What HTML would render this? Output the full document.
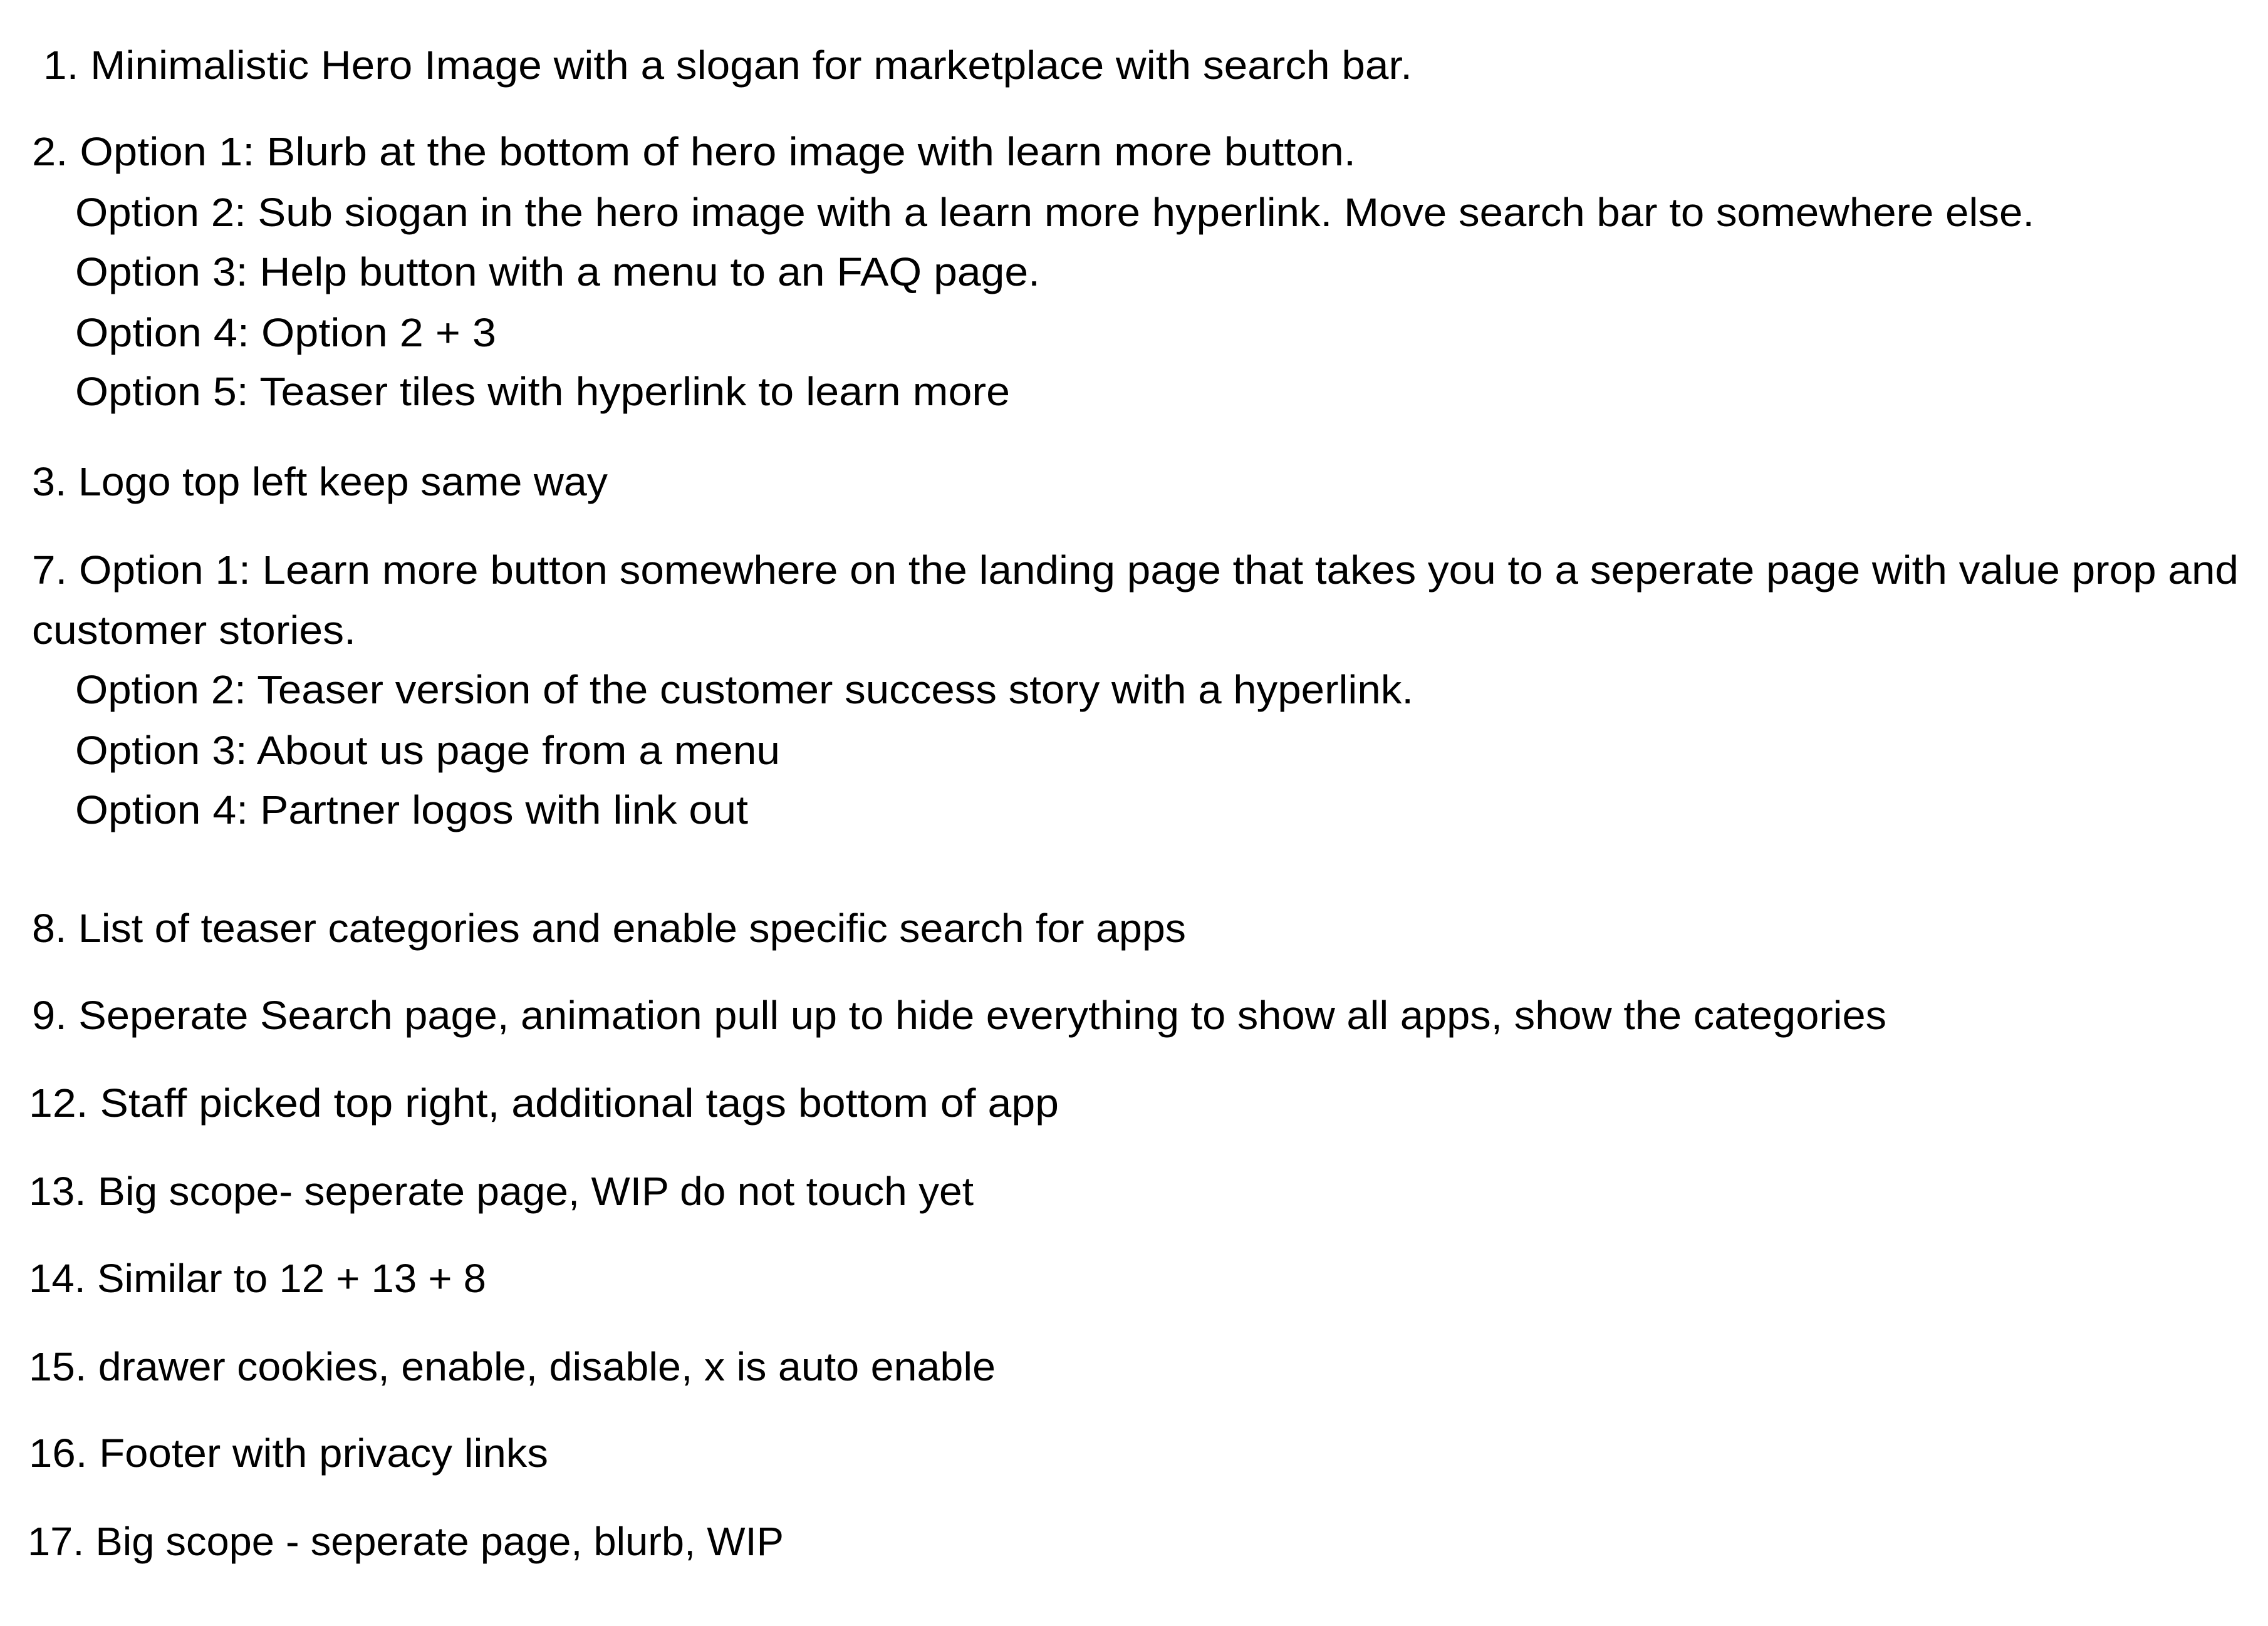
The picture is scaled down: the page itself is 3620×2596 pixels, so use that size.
<!DOCTYPE html>
<html><head><meta charset="utf-8"><style>
html,body{margin:0;padding:0;background:#fff;width:3620px;height:2596px;overflow:hidden}
svg{display:block}
text{font-family:"Liberation Sans",sans-serif;font-size:64px;fill:#000}
</style></head><body>
<svg width="3620" height="2596" xmlns="http://www.w3.org/2000/svg">
<text x="69" y="126" textLength="2185" lengthAdjust="spacingAndGlyphs">1. Minimalistic Hero Image with a slogan for marketplace with search bar.</text>
<text x="51" y="264" textLength="2113" lengthAdjust="spacingAndGlyphs">2. Option 1: Blurb at the bottom of hero image with learn more button.</text>
<text x="120" y="361" textLength="3127" lengthAdjust="spacingAndGlyphs">Option 2: Sub siogan in the hero image with a learn more hyperlink. Move search bar to somewhere else.</text>
<text x="120" y="456" textLength="1540" lengthAdjust="spacingAndGlyphs">Option 3:  Help button with a menu to an FAQ page.</text>
<text x="120" y="553" textLength="672" lengthAdjust="spacingAndGlyphs">Option 4:  Option 2 + 3</text>
<text x="120" y="647" textLength="1492" lengthAdjust="spacingAndGlyphs">Option 5: Teaser tiles with hyperlink to learn more</text>
<text x="51" y="791" textLength="919" lengthAdjust="spacingAndGlyphs">3. Logo top left keep same way</text>
<text x="51" y="932" textLength="3522" lengthAdjust="spacingAndGlyphs">7. Option 1: Learn more button somewhere on the landing page that takes you to a seperate page with value prop and</text>
<text x="51" y="1028" textLength="517" lengthAdjust="spacingAndGlyphs">customer stories.</text>
<text x="120" y="1123" textLength="2136" lengthAdjust="spacingAndGlyphs">Option 2: Teaser version of the customer success story with a hyperlink.</text>
<text x="120" y="1220" textLength="1125" lengthAdjust="spacingAndGlyphs">Option 3: About us page from a menu</text>
<text x="120" y="1315" textLength="1074" lengthAdjust="spacingAndGlyphs">Option 4: Partner logos with link out</text>
<text x="51" y="1504" textLength="1842" lengthAdjust="spacingAndGlyphs">8. List of teaser categories and enable specific search for apps</text>
<text x="51" y="1643" textLength="2960" lengthAdjust="spacingAndGlyphs">9. Seperate Search page, animation pull up to hide everything to show all apps, show the categories</text>
<text x="46" y="1783" textLength="1644" lengthAdjust="spacingAndGlyphs">12. Staff picked top right, additional tags bottom of app</text>
<text x="46" y="1924" textLength="1508" lengthAdjust="spacingAndGlyphs">13. Big scope- seperate page, WIP do not touch yet</text>
<text x="46" y="2063" textLength="730" lengthAdjust="spacingAndGlyphs">14. Similar to 12 + 13 + 8</text>
<text x="46" y="2204" textLength="1543" lengthAdjust="spacingAndGlyphs">15. drawer cookies, enable, disable, x is auto enable</text>
<text x="46" y="2342" textLength="829" lengthAdjust="spacingAndGlyphs">16. Footer with privacy links</text>
<text x="44" y="2483" textLength="1207" lengthAdjust="spacingAndGlyphs">17. Big scope - seperate page, blurb, WIP</text>
</svg>
</body></html>
